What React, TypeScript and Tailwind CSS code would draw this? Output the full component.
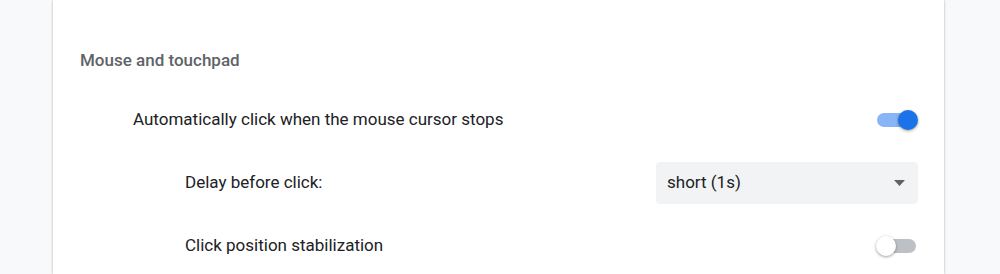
import { useState } from 'react'

function Toggle({ on, onChange }: { on: boolean; onChange: (v: boolean) => void }) {
  return (
    <button
      onClick={() => onChange(!on)}
      className="relative flex h-5 w-[42px] items-center"
      aria-pressed={on}
    >
      <span className={on ? 'ml-[1px] h-[14px] w-[38px] rounded-full bg-[#8ab4f8]' : 'ml-[2px] h-[14px] w-[38px] rounded-full bg-[#bdc1c6]'} />
      <span
        className={
          on
            ? 'absolute right-0 top-0 h-5 w-5 rounded-full bg-[#1a73e8] shadow-[0_1px_3px_rgba(0,0,0,0.4)]'
            : 'absolute left-0 top-0 h-5 w-5 rounded-full bg-white shadow-[0_1px_3px_rgba(0,0,0,0.4)]'
        }
      />
    </button>
  )
}

export default function App() {
  const [autoClick, setAutoClick] = useState(true)
  const [stabilize, setStabilize] = useState(false)

  return (
    <div className="h-[274px] overflow-hidden bg-[#f8f9fa] font-['Roboto',sans-serif]">
      <div className="ml-[53px] h-full w-[891px] bg-white shadow-[0_0_2px_rgba(60,64,67,0.3),0_1px_3px_rgba(60,64,67,0.15)]">
        {/* Section header */}
        <div className="pl-[27px] pt-[48px] pb-[16px] text-[17px] leading-6 font-medium text-[#5f6368]">
          Mouse and touchpad
        </div>

        {/* Auto click */}
        <div className="flex h-[63px] items-center justify-between pl-[80px] pr-[26px] text-[17px] text-[#202124]">
          <span>Automatically click when the mouse cursor stops</span>
          <Toggle on={autoClick} onChange={setAutoClick} />
        </div>

        {/* Delay */}
        <div className="flex h-[63px] items-center justify-between pl-[132px] pr-[26px] text-[17px] text-[#202124]">
          <span>Delay before click:</span>
          <div className="flex h-[42px] w-[262px] items-center justify-between rounded bg-[#f1f3f4] pl-[11px] pr-[13px]">
            <span>short (1s)</span>
            <svg width="11" height="6" viewBox="0 0 11 6">
              <path d="M0 0h11L5.5 6z" fill="#5f6368" />
            </svg>
          </div>
        </div>

        {/* Stabilization */}
        <div className="flex h-[63px] items-center justify-between pl-[132px] pr-[26px] text-[17px] text-[#202124]">
          <span>Click position stabilization</span>
          <Toggle on={stabilize} onChange={setStabilize} />
        </div>
      </div>
    </div>
  )
}
